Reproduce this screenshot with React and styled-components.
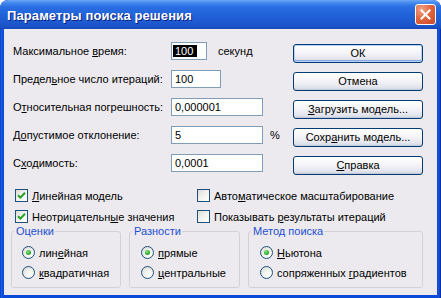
import React from 'react';
import styled, { createGlobalStyle } from 'styled-components';

const GlobalStyle = createGlobalStyle`
  html, body { margin: 0; padding: 0; background: #ffffff; }
  body { font-family: "Liberation Sans", Arial, sans-serif; font-size: 11px; color: #000; }
  * { box-sizing: border-box; }
  u { text-decoration: underline; text-underline-offset: 1px; }
`;

const Window = styled.div`
  width: 441px;
  height: 298px;
  display: flex;
  flex-direction: column;
  background: linear-gradient(to right, #0b2fa8 0px, #1a5ee6 1px, #0a4ad8 3px, #0a4ad8 438px, #1a5ee6 439px, #0b2fa8 440px);
  border-radius: 8px 8px 0 0;
  overflow: hidden;
`;

const TitleBar = styled.div`
  height: 29px;
  flex: none;
  display: flex;
  align-items: center;
  justify-content: space-between;
  padding: 0 5px 0 7px;
  background: linear-gradient(to bottom, #6aa6f4 0px, #4289ee 3px, #2a6ee2 7px, #2263da 14px, #1f5cd3 20px, #1b53c8 26px, #1749bb 29px);
  border-radius: 8px 8px 0 0;
`;

const TitleText = styled.span`
  font-family: "Liberation Sans", Arial, sans-serif;
  font-weight: bold;
  font-size: 13px;
  color: #ffffff;
  text-shadow: 1px 1px 0 #0c1f80;
  letter-spacing: 0.1px;
  margin-top: 1px;
`;

const CloseButton = styled.div`
  width: 21px;
  height: 21px;
  border: 1px solid #ffffff;
  border-radius: 3px;
  background: radial-gradient(circle at 30% 25%, #f0a58a 0%, #e1683f 45%, #c8452a 100%);
  display: flex;
  align-items: center;
  justify-content: center;
`;

const Client = styled.div`
  flex: 1;
  margin: 0 4px 3px 4px;
  background: #eceaef;
  display: flex;
  flex-direction: column;
`;

const TopSection = styled.div`
  display: flex;
  padding: 13px 0 0 9px;
`;

const Form = styled.div`
  width: 280px;
  display: grid;
  grid-template-columns: 158px 1fr;
  grid-auto-rows: 28px;
  align-items: start;
`;

const Label = styled.div`
  height: 18px;
  line-height: 18px;
  white-space: nowrap;
`;

const FieldCell = styled.div`
  height: 18px;
  display: flex;
  align-items: center;
  gap: ${p => p.$gap || 8}px;
  white-space: nowrap;
`;

const TextBox = styled.div`
  width: ${p => p.$w}px;
  height: 18px;
  border: 1px solid #7f9db9;
  background: #ffffff;
  padding-left: ${p => (p.$selected ? 1 : 3)}px;
  display: flex;
  align-items: center;
  white-space: nowrap;
`;

const Selection = styled.span`
  background: #000000;
  color: #ffffff;
  padding: 0 4px 0 2px;
  line-height: 12px;
`;

const ButtonCol = styled.div`
  width: 130px;
  margin-top: 2px;
  display: flex;
  flex-direction: column;
  gap: 9px;
`;

const Button = styled.div`
  height: 19px;
  border: 1px solid #003c74;
  border-radius: 3px;
  background: linear-gradient(to bottom, #ffffff 0%, #f6f6f9 40%, #e8e9f0 75%, #d2d6e4 100%);
  line-height: 17px;
  text-align: center;
  white-space: nowrap;
  box-shadow: ${p => (p.$default
    ? 'inset 0 0 0 1px #b9d1f4, inset 0 -1px 0 1px #87a9e0'
    : 'inset 0 -1px 0 #c5cad8')};
`;

const CheckGrid = styled.div`
  display: grid;
  grid-template-columns: 182px 1fr;
  grid-auto-rows: 13px;
  row-gap: 8px;
  padding-left: 11px;
  margin-top: 7px;
`;

const CheckItem = styled.div`
  display: flex;
  align-items: center;
  gap: 4px;
  height: 13px;
  white-space: nowrap;
`;

const Box = styled.span`
  width: 13px;
  height: 13px;
  flex: none;
  border: 1px solid #1c5180;
  background: linear-gradient(135deg, #dcdcd6 0%, #f2f2ef 50%, #ffffff 100%);
  display: flex;
  align-items: center;
  justify-content: center;
`;

const GroupRow = styled.div`
  display: flex;
  gap: 8px;
  padding-left: 7px;
  margin-top: 2px;
`;

const Group = styled.fieldset`
  margin: 0;
  padding: 0;
  width: ${p => p.$w}px;
  height: 63px;
  border: 1px solid #d3d1d8;
  border-radius: 3px;
  min-width: 0;
`;

const Legend = styled.legend`
  padding: 0 1px 0 2px;
  margin-left: 2px;
  color: #1f4fd0;
  font-size: 11px;
  line-height: 13px;
`;

const RadioList = styled.div`
  display: flex;
  flex-direction: column;
  gap: 7px;
  padding: 8px 0 0 ${p => p.$pl || 11}px;
`;

const RadioItem = styled.div`
  display: flex;
  align-items: center;
  gap: 4px;
  height: 13px;
  white-space: nowrap;
`;

const RadioCircle = styled.span`
  width: 13px;
  height: 13px;
  flex: none;
  border-radius: 50%;
  border: 1px solid #1c5180;
  background: radial-gradient(circle at 65% 70%, #ffffff 0%, #f4f4f1 35%, #d6d6ce 100%);
  display: flex;
  align-items: center;
  justify-content: center;
`;

const Dot = styled.span`
  width: 5px;
  height: 5px;
  border-radius: 50%;
  background: radial-gradient(circle at 40% 35%, #8ee08a 0%, #2fb32b 55%, #1a8a18 100%);
`;

const CheckMark = () => (
  <svg width="9" height="9" viewBox="0 0 9 9">
    <path d="M1 4.2 L3.4 6.6 L8 1.8" fill="none" stroke="#21a121" strokeWidth="2" />
  </svg>
);

const Check = ({ checked, children }) => (
  <CheckItem>
    <Box>{checked && <CheckMark />}</Box>
    <span>{children}</span>
  </CheckItem>
);

const Radio = ({ checked, children }) => (
  <RadioItem>
    <RadioCircle>{checked && <Dot />}</RadioCircle>
    <span>{children}</span>
  </RadioItem>
);

export default function App() {
  return (
    <>
      <GlobalStyle />
      <Window>
        <TitleBar>
          <TitleText>Параметры поиска решения</TitleText>
          <CloseButton>
            <svg width="11" height="11" viewBox="0 0 11 11">
              <path d="M1.5 1.5 L9.5 9.5 M9.5 1.5 L1.5 9.5" stroke="#ffffff" strokeWidth="2" strokeLinecap="square" />
            </svg>
          </CloseButton>
        </TitleBar>
        <Client>
          <TopSection>
            <Form>
              <Label>Максимальное <u>в</u>ремя:</Label>
              <FieldCell $gap={11}>
                <TextBox $w={36} $selected><Selection>100</Selection></TextBox>
                <span>секунд</span>
              </FieldCell>
              <Label>Предел<u>ь</u>ное число итераций:</Label>
              <FieldCell><TextBox $w={50}>100</TextBox></FieldCell>
              <Label>О<u>т</u>носительная погрешность:</Label>
              <FieldCell><TextBox $w={92}>0,000001</TextBox></FieldCell>
              <Label>Д<u>о</u>пустимое отклонение:</Label>
              <FieldCell $gap={7}>
                <TextBox $w={92}>5</TextBox>
                <span>%</span>
              </FieldCell>
              <Label>С<u>х</u>одимость:</Label>
              <FieldCell><TextBox $w={92}>0,0001</TextBox></FieldCell>
            </Form>
            <ButtonCol>
              <Button $default>ОК</Button>
              <Button>Отмена</Button>
              <Button><u>З</u>агрузить модель...</Button>
              <Button>Сохр<u>а</u>нить модель...</Button>
              <Button><u>С</u>правка</Button>
            </ButtonCol>
          </TopSection>
          <CheckGrid>
            <Check checked><u>Л</u>инейная модель</Check>
            <Check>Авто<u>м</u>атическое масштабирование</Check>
            <Check checked>Неотрицательн<u>ы</u>е значения</Check>
            <Check>Показывать <u>р</u>езультаты итераций</Check>
          </CheckGrid>
          <GroupRow>
            <Group $w={110}>
              <Legend>Оценки</Legend>
              <RadioList $pl={10}>
                <Radio checked>лин<u>е</u>йная</Radio>
                <Radio><u>к</u>вадратичная</Radio>
              </RadioList>
            </Group>
            <Group $w={111}>
              <Legend>Разности</Legend>
              <RadioList>
                <Radio checked><u>п</u>рямые</Radio>
                <Radio><u>ц</u>ентральные</Radio>
              </RadioList>
            </Group>
            <Group $w={175}>
              <Legend>Метод поиска</Legend>
              <RadioList>
                <Radio checked><u>Н</u>ьютона</Radio>
                <Radio>сопряженных <u>г</u>радиентов</Radio>
              </RadioList>
            </Group>
          </GroupRow>
        </Client>
      </Window>
    </>
  );
}
